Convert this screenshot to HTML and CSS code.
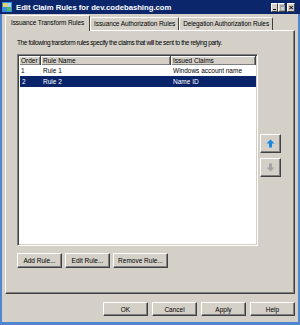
FILE: index.html
```html
<!DOCTYPE html>
<html lang="en">
  <head>
    <meta charset="UTF-8" />
    <title>Edit Claim Rules</title>
    <link rel="stylesheet" href="styles.css">
  </head>
  <body>
    <div class="window">
      <!-- Caption bar -->
      <div class="titlebar">
        <svg class="app-icon" width="10" height="10" viewBox="0 0 10 10">
          <rect x="0" y="0" width="10" height="10" fill="#3a8ee0" />
          <rect x="1" y="1" width="4" height="4" fill="#f4d24a" />
          <rect x="5" y="5" width="4" height="4" fill="#5cb85c" />
          <rect x="5" y="1" width="4" height="4" fill="#9fd3f7" />
        </svg>
        <span class="title">Edit Claim Rules for dev.codebashing.com</span>
        <div class="caption-buttons">
          <span class="cap-btn min"></span>
          <span class="cap-btn max"></span>
          <span class="cap-btn close">&#215;</span>
        </div>
      </div>

      <div class="body">
        <div class="tabs">
          <div class="tab active">Issuance Transform Rules</div>
          <div class="tab">Issuance Authorization Rules</div>
          <div class="tab">Delegation Authorization Rules</div>
        </div>

        <div class="panel">
          <p class="intro">The following transform rules specify the claims that will be sent to the relying party.</p>
          <div class="list-row">
            <div class="listview">
              <div class="lv-head">
                <span class="col-order">Order</span>
                <span class="col-name">Rule Name</span>
                <span class="col-claims">Issued Claims</span>
              </div>
              <div class="lv-row">
                <span class="col-order">1</span>
                <span class="col-name">Rule 1</span>
                <span class="col-claims">Windows account name</span>
              </div>
              <div class="lv-row selected">
                <span class="col-order">2</span>
                <span class="col-name">Rule 2</span>
                <span class="col-claims">Name ID</span>
              </div>
            </div>
            <div class="order-buttons">
              <button class="btn arrow">
                <svg width="9" height="9" viewBox="0 0 9 9">
                  <polygon points="4.5,0.5 8.5,4.5 6,4.5 6,8.5 3,8.5 3,4.5 0.5,4.5" fill="#1c86e0" />
                </svg>
              </button>
              <button class="btn arrow">
                <svg width="9" height="9" viewBox="0 0 9 9">
                  <polygon points="4.5,8.5 8.5,4.5 6,4.5 6,0.5 3,0.5 3,4.5 0.5,4.5" fill="#a4a4a4" />
                </svg>
              </button>
            </div>
          </div>
          <div class="rule-buttons">
            <button class="btn">Add Rule...</button>
            <button class="btn">Edit Rule...</button>
            <button class="btn wide">Remove Rule...</button>
          </div>
        </div>

        <div class="dialog-buttons">
          <button class="btn">OK</button>
          <button class="btn">Cancel</button>
          <button class="btn">Apply</button>
          <button class="btn">Help</button>
        </div>
      </div>
    </div>
  </body>
</html>
```

FILE: styles.css
```css
body {
  margin: 0;
  font-family: "Liberation Sans", Arial, sans-serif;
  font-size: 6.5px;
  color: #000;
  background: #d4d0c8;
}
.window {
  width: 300px;
  height: 325px;
  display: flex;
  flex-direction: column;
}
.titlebar {
  height: 14px;
  flex: none;
  background: #0b266b;
  display: flex;
  align-items: center;
  padding: 0 5px 0 2px;
}
.app-icon {
  flex: none;
}
.title {
  margin-left: 4px;
  color: #fff;
  font-weight: bold;
  font-size: 7.7px;
  flex: 1;
  white-space: nowrap;
}
.caption-buttons {
  display: flex;
  align-items: center;
}
.cap-btn {
  width: 7px;
  height: 9px;
  background: #d4d0c8;
  box-sizing: border-box;
  border: 1px solid;
  border-color: #fff #404040 #404040 #fff;
  position: relative;
  font-size: 8px;
  line-height: 7px;
  text-align: center;
}
.cap-btn.min::after {
  content: "";
  position: absolute;
  left: 1px;
  bottom: 1px;
  width: 3px;
  height: 1px;
  background: #000;
}
.cap-btn.max::after {
  content: "";
  position: absolute;
  left: 1px;
  top: 1px;
  width: 3px;
  height: 3px;
  border: 1px solid #a0a0a0;
  border-top-width: 2px;
}
.cap-btn.close {
  width: 8px;
  margin-left: 2px;
  font-weight: bold;
}
.body {
  flex: 1;
  display: flex;
  flex-direction: column;
  border: solid #4f86cf;
  border-width: 0 2px 3px 2px;
  padding-top: 1px;
}
.tabs {
  display: flex;
  align-items: flex-end;
  height: 15px;
  padding-left: 3px;
}
.tab {
  height: 13px;
  box-sizing: border-box;
  padding: 0 3px;
  line-height: 12px;
  letter-spacing: -0.1px;
  white-space: nowrap;
  border: 1px solid;
  border-bottom: 0;
  border-color: #fff #404040 #404040 #fff;
  border-radius: 2px 2px 0 0;
}
.tab.active {
  height: 16px;
  padding: 0 5px;
  margin-bottom: -1px;
  background: #d4d0c8;
  position: relative;
  z-index: 1;
  line-height: 14px;
}
.panel {
  height: 264px;
  margin: 0 3px;
  box-sizing: border-box;
  border: 1px solid;
  border-color: #fff #404040 #404040 #fff;
  box-shadow: inset -1px -1px 0 #808080;
  padding-left: 11px;
}
.intro {
  margin: 0 0 7px;
  padding-top: 8px;
  line-height: 8px;
  letter-spacing: -0.4px;
  white-space: nowrap;
}
.list-row {
  display: flex;
}
.listview {
  width: 241px;
  height: 192px;
  box-sizing: border-box;
  background: #fff;
  border: 1px solid;
  border-color: #808080 #fff #fff #808080;
  box-shadow: inset 1px 1px 0 #404040, inset -1px -1px 0 #d4d0c8;
  padding: 1px;
}
.lv-head,
.lv-row {
  display: flex;
  white-space: nowrap;
}
.lv-head span {
  height: 9px;
  line-height: 9px;
  box-sizing: border-box;
  padding-left: 2px;
  background: #d4d0c8;
  box-shadow: inset 1px 1px 0 #fff, inset -1px -1px 0 #808080;
  border-right: 1px solid #404040;
}
.lv-row span {
  height: 11px;
  line-height: 11px;
  padding-left: 2px;
  box-sizing: border-box;
}
.col-order {
  width: 22px;
}
.col-name {
  width: 130px;
}
.col-claims {
  width: 85px;
}
.lv-row.selected {
  background: #0a246a;
  color: #fff;
  margin-left: 1px;
}
.lv-row.selected .col-order {
  width: 21px;
}
.order-buttons {
  display: flex;
  flex-direction: column;
  gap: 5px;
  margin-left: 2px;
  padding-top: 80px;
}
.btn {
  font: inherit;
  color: #000;
  background: #d4d0c8;
  border: 1px solid;
  border-color: #fff #404040 #404040 #fff;
  box-shadow: inset -1px -1px 0 #808080;
  padding: 0;
  width: 45px;
  height: 15px;
  white-space: nowrap;
}
.btn.arrow {
  width: 21px;
  height: 19px;
  display: flex;
  align-items: center;
  justify-content: center;
}
.btn.wide {
  width: 55px;
}
.rule-buttons {
  display: flex;
  gap: 3px;
  margin-top: 7px;
}
.dialog-buttons {
  display: flex;
  justify-content: flex-end;
  gap: 4px;
  margin-top: 8px;
  padding-right: 3px;
}
.dialog-buttons .btn {
  height: 14px;
}
```
